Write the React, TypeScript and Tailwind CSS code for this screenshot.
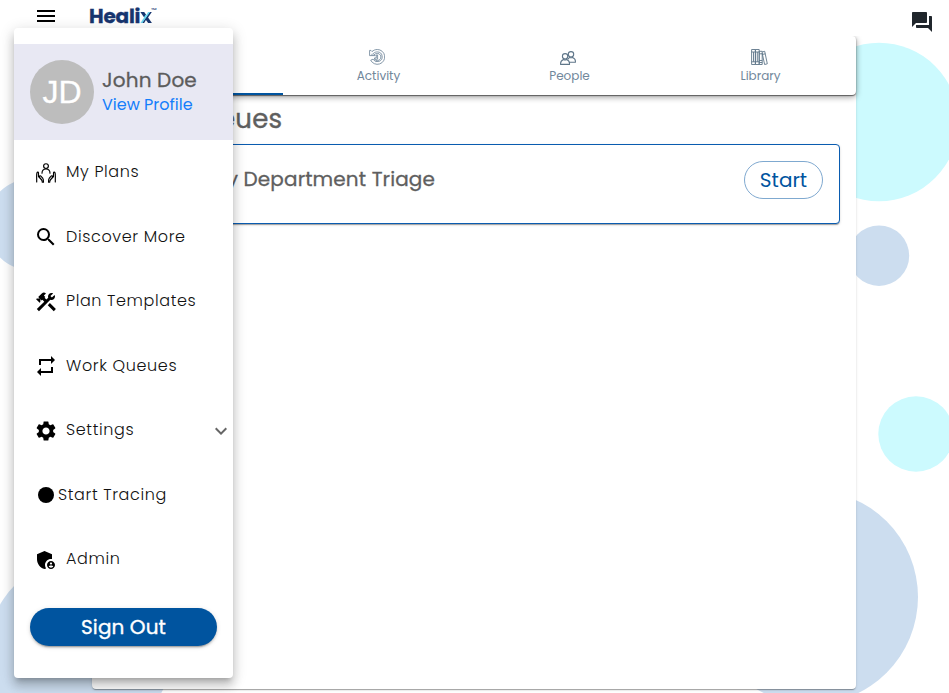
import React from "react";
import {
  MdMenu,
  MdSearch,
  MdConstruction,
  MdRepeat,
  MdSettings,
  MdExpandMore,
  MdAdminPanelSettings,
  MdForum,
} from "react-icons/md";

function PlansIcon() {
  return (
    <svg width="20" height="20" viewBox="0 0 20 20" fill="none" stroke="#000" strokeWidth="1.15" strokeLinecap="round" strokeLinejoin="round">
      <circle cx="10" cy="3.1" r="2.4" />
      <path d="M6 10.200C6 7.500 7.800 6 10 6s4 1.500 4 4.200" />
      <path d="M.7 19v-2.600C.6 14 .5 11 1 9.700c.5-1.100 1.500-.6 1.500.4v3.400l2.800 3c.7.8 1 1.500 1 2.800M4 14.800c-1.400-1.700.1-2.700 1.100-1.500l1.600 1.900c.6.8.8 1.600.8 4" />
      <path d="M19.300 19v-2.600c.1-2.400.2-5.400-.3-6.700-.5-1.100-1.500-.6-1.500.4v3.400l-2.800 3c-.7.8-1 1.500-1 2.800M16 14.800c1.400-1.700-.1-2.700-1.100-1.500l-1.600 1.900c-.6.8-.8 1.600-.8 4" />
    </svg>
  );
}

function ActivityIcon() {
  return (
    <svg width="16" height="16" viewBox="0 0 16 16" fill="none" stroke="#6f8599" strokeWidth=".85" strokeLinejoin="round">
      <path d="M.6 1.400v5.200h5.600l-2-2C5.700 3.200 7 2.900 8.300 2.900a4.900 4.900 0 1 1-4.300 7.300L1.700 11.200A7.400 7.400 0 1 0 8.300.5c-2.100 0-3.900.8-5.300 2.100L1.900 1.400Z" />
      <path d="M3 6.500V4.800M4.800 6.400c.8-1.300 2-2 3.500-2a3.600 3.600 0 1 1-3 5.600M7.300 5.900v3H5.600v1.300h3V5.900Z" />
    </svg>
  );
}

function PeopleIcon() {
  return (
    <svg width="16" height="14" viewBox="0 0 16 14" fill="none" stroke="#5f7689" strokeWidth="1.1" strokeLinejoin="round">
      <circle cx="5.100" cy="5.300" r="2.700" />
      <circle cx="11" cy="3.300" r="2.700" />
      <path d="M.6 13.400v-1.200c0-2 1.400-3.100 2.900-3.800.9.500 2.300.5 3.200 0 1.500.7 2.800 1.800 2.800 3.800v1.200ZM8 8.300c.4-.9.900-1.400 1.600-1.900.9.400 2 .4 2.900 0 1.700.7 2.900 1.800 2.900 3.700v1.100H9.600" />
    </svg>
  );
}

function LibraryIcon() {
  return (
    <svg width="17" height="16" viewBox="0 0 17 16" fill="none" stroke="#5f7689" strokeWidth=".9">
      <path d="M.6.5h3.800v15H.6zM4.400.5h3.800v15H4.400zM8.200 2.300h3v13.200h-3zM.6 3h7.600M.6 12.800h7.600M8.200 4.800h3M8.200 11.500h3M8.200 13.500h3M11.200 3l2.500-.7 2.600 12.500-2.700.7-2.400-11.400M11.700 5.400l2.600-.6M2.500 3v9.800M6.300 3v9.800" />
    </svg>
  );
}

const items = [
  { label: "My Plans", icon: <PlansIcon /> },
  { label: "Discover More", icon: <MdSearch size={24} /> },
  { label: "Plan Templates", icon: <MdConstruction size={24} /> },
  { label: "Work Queues", icon: <MdRepeat size={24} /> },
  { label: "Settings", icon: <MdSettings size={24} />, expandable: true },
  { label: "Start Tracing", icon: <span className="size-4 rounded-full bg-black" />, tight: true },
  { label: "Admin", icon: <MdAdminPanelSettings size={24} className="mt-px" /> },
];

function Backdrop() {
  return (
    <svg className="absolute inset-0" width="949" height="693">
      <g fill="#ccddef">
        <circle cx="32.600" cy="224.500" r="46.400" />
        <circle cx="80" cy="650" r="92" />
        <circle cx="879" cy="255.700" r="30.200" />
        <circle cx="811" cy="597" r="107" />
      </g>
      <g fill="#ccfafe">
        <circle cx="879" cy="122" r="79.300" />
        <circle cx="916" cy="434" r="37.700" />
      </g>
    </svg>
  );
}

function Tab({ icon, label }: { icon: React.ReactNode; label: string }) {
  return (
    <div className="flex flex-1 flex-col items-center pt-[13px]">
      <span className="mr-[3px] flex h-4 items-end">{icon}</span>
      <span className="mt-[2px] text-[12px] leading-[18px] text-[#71879b]">{label}</span>
    </div>
  );
}

function SideMenu() {
  return (
    <nav className="absolute left-[14px] top-7 flex h-[650px] w-[219px] flex-col rounded bg-white pt-4 shadow-[0_5px_5px_-3px_rgba(0,0,0,0.2),0_8px_10px_1px_rgba(0,0,0,0.14),0_3px_14px_2px_rgba(0,0,0,0.12)]">
      <div className="flex h-24 shrink-0 items-center bg-[#e8e8f3] pl-4">
        <div className="flex size-16 items-center justify-center rounded-full bg-[#bdbdbd] font-['Liberation_Sans',sans-serif] text-[32px] text-white [-webkit-text-stroke:0.300px_#fff]">JD</div>
        <div className="-mt-px ml-2 whitespace-nowrap">
          <div className="text-[20px] leading-[26px] tracking-[0.150px] text-[#5c5c5c] [-webkit-text-stroke:0.300px_#5c5c5c]">John Doe</div>
          <div className="pt-px text-[16px] leading-[22px] text-[#147efb]">View Profile</div>
        </div>
      </div>
      <ul>
        {items.map((item) => (
          <li key={item.label} className="flex h-[64.430px] items-center pl-5">
            <span className="mt-[1.500px] flex w-6 shrink-0 justify-center text-black">{item.icon}</span>
            <span className={`${item.tight ? "ml-0" : "ml-2"} whitespace-nowrap pt-[0.500px] text-[16px] font-light tracking-[0.620px] text-[#111]`}>{item.label}</span>
            {item.expandable && <MdExpandMore size={24} className="ml-auto mt-[2px] text-[#666]" />}
          </li>
        ))}
      </ul>
      <button className="mx-4 mt-[17px] h-[38px] shrink-0 rounded-full bg-[#00549f] text-[20px] tracking-[0.100px] text-white shadow-[0_3px_1px_-2px_rgba(0,0,0,0.2),0_2px_2px_rgba(0,0,0,0.14),0_1px_5px_rgba(0,0,0,0.12)] [-webkit-text-stroke:0.350px_#fff]">
        Sign Out
      </button>
    </nav>
  );
}

export default function App() {
  return (
    <div className="relative h-[693px] w-[949px] overflow-hidden bg-white font-[Poppins,Inter,sans-serif]">
      <Backdrop />
      <div className="relative flex h-full flex-col">
        <header className="flex h-9 shrink-0 items-start pl-[34px] pr-[15px]">
          <MdMenu size={24} className="mt-1 text-black" />
          <div className="ml-[31px] mt-[5px] flex items-start text-[20px] font-bold leading-[23px] tracking-[-0.200px] text-[#17356f] [-webkit-text-stroke:0.300px_#17356f]">
            Heali<span className="bg-[linear-gradient(125deg,#17356f_43%,#6bd5ee_46%,#6bd5ee_52%,#17356f_55%)] bg-clip-text text-transparent [-webkit-text-stroke:0px]">x</span>
            <span className="-ml-px text-[4px] font-medium leading-[7px] [-webkit-text-stroke:0px]">TM</span>
          </div>
          <MdForum size={24} className="ml-auto mt-[10px] shrink-0 text-[#20262c]" />
        </header>
        <main className="ml-[92px] flex h-[653px] w-[764px] flex-col rounded bg-white shadow-[0_2px_1px_-1px_rgba(0,0,0,0.2),0_1px_1px_rgba(0,0,0,0.14),0_1px_3px_rgba(0,0,0,0.12)] [clip-path:inset(0_-12px_-12px_-12px)]">
          <div className="relative flex h-[59px] shrink-0 rounded bg-white shadow-[0_1px_1px_rgba(0,0,0,0.5),0_2px_6px_rgba(0,0,0,0.4)]">
            <div className="flex-1 border-b-2 border-[#00549f]" />
            <Tab icon={<ActivityIcon />} label="Activity" />
            <Tab icon={<PeopleIcon />} label="People" />
            <Tab icon={<LibraryIcon />} label="Library" />
          </div>
          <h1 className="ml-4 mt-2 w-[174px] whitespace-nowrap text-right text-[26px] leading-[32px] tracking-[0.250px] text-[#5f5f5f] [-webkit-text-stroke:0.400px_#5f5f5f]">Work Queues</h1>
          <section className="mx-4 mt-[9px] flex h-20 items-start justify-between rounded border border-[#0a5cb0] bg-white pr-4 pt-4 shadow-[0_2px_1px_-1px_rgba(0,0,0,0.2),0_1px_1px_rgba(0,0,0,0.14),0_1px_3px_rgba(0,0,0,0.12)]">
            <h2 className="flex w-[326px] justify-end whitespace-nowrap pt-[3px] text-[20px] leading-[30px] tracking-[0.120px] text-[#5f5f5f] [-webkit-text-stroke:0.300px_#5f5f5f]">Emergency Department Triage</h2>
            <button className="h-[38px] w-[79px] rounded-full border border-[#7fa9d0] text-[20px] text-[#00549f]">Start</button>
          </section>
        </main>
      </div>
      <SideMenu />
    </div>
  );
}
